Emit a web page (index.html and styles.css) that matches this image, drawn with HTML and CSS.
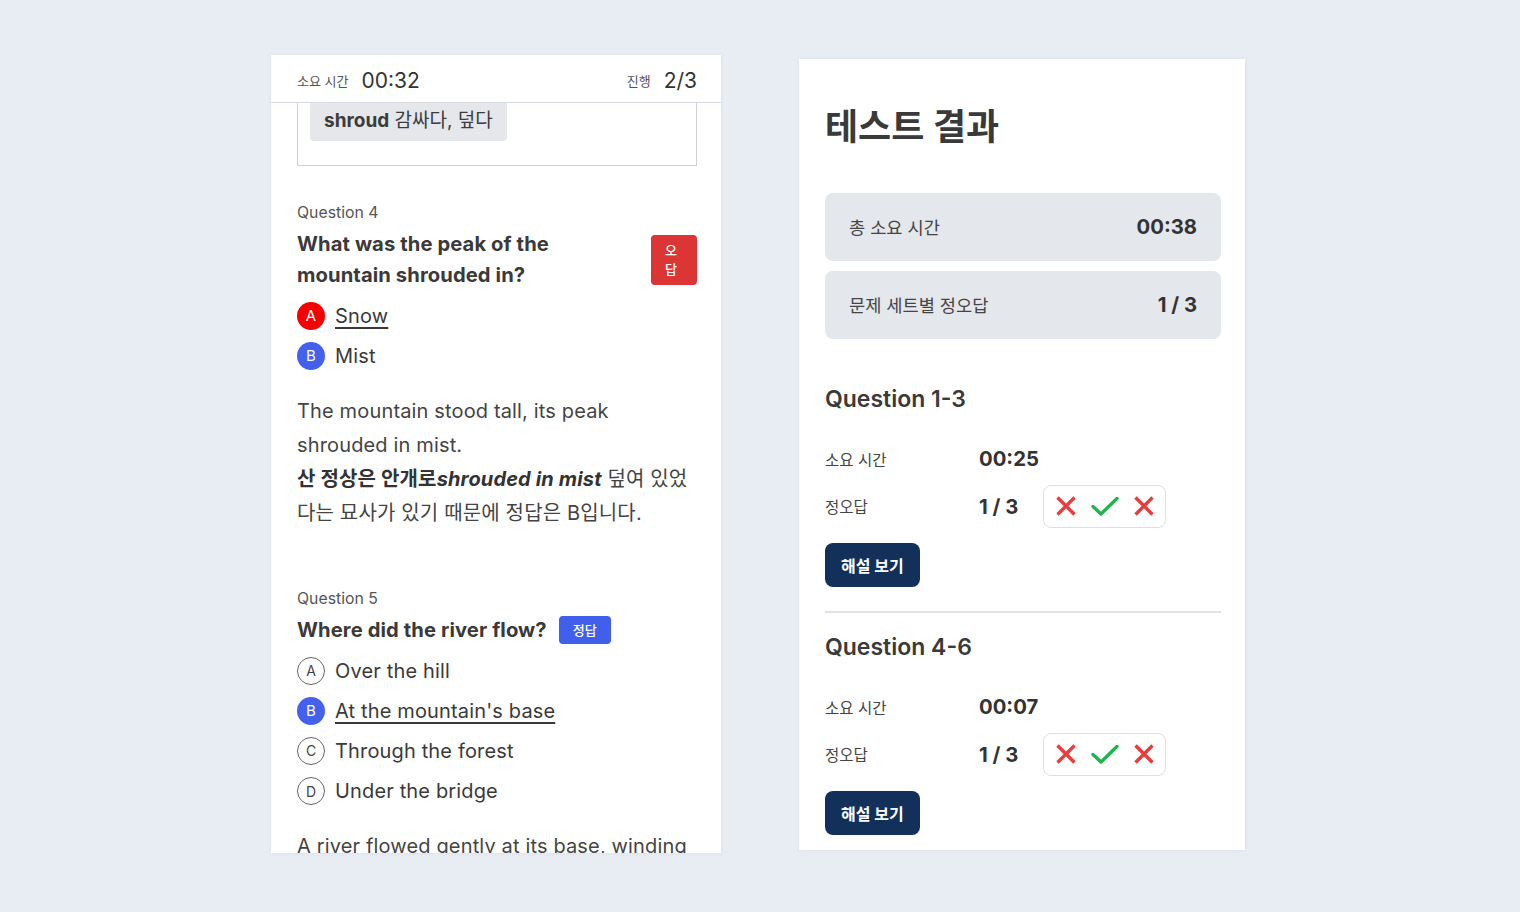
FILE: index.html
```html
<!DOCTYPE html>
<html lang="ko">
<head>
<meta charset="utf-8">
<title>테스트 결과</title>
<link rel="stylesheet" href="styles.css">
</head>
<body>
<main class="page">
  <section class="quiz">
    <header class="quiz-head">
      <div class="stat"><span class="stat-label">소요 시간</span><span class="stat-value">00:32</span></div>
      <div class="stat"><span class="stat-label">진행</span><span class="stat-value">2/3</span></div>
    </header>
    <div class="quiz-body">
      <div class="vocab-box">
        <span class="chip"><b>shroud</b> 감싸다, 덮다</span>
      </div>

      <article class="question q4">
        <p class="q-label">Question 4</p>
        <div class="q-title-row">
          <h3 class="q-title">What was the peak of the mountain shrouded in?</h3>
          <span class="badge badge-wrong">오답</span>
        </div>
        <ul class="options">
          <li class="option"><span class="opt-mark mark-red">A</span><span class="opt-text picked">Snow</span></li>
          <li class="option"><span class="opt-mark mark-blue">B</span><span class="opt-text">Mist</span></li>
        </ul>
        <p class="explain">The mountain stood tall, its peak shrouded in mist.<br><b>산 정상은 안개로<i>shrouded in mist</i></b> 덮여 있었다는 묘사가 있기 때문에 정답은 B입니다.</p>
      </article>

      <article class="question q5">
        <p class="q-label">Question 5</p>
        <div class="q-title-row">
          <h3 class="q-title q-title-inline">Where did the river flow?</h3>
          <span class="badge badge-right">정답</span>
        </div>
        <ul class="options">
          <li class="option"><span class="opt-mark mark-outline">A</span><span class="opt-text">Over the hill</span></li>
          <li class="option"><span class="opt-mark mark-blue">B</span><span class="opt-text picked">At the mountain's base</span></li>
          <li class="option"><span class="opt-mark mark-outline">C</span><span class="opt-text">Through the forest</span></li>
          <li class="option"><span class="opt-mark mark-outline">D</span><span class="opt-text">Under the bridge</span></li>
        </ul>
        <p class="explain">A river flowed gently at its base, winding through the valley below.</p>
      </article>
    </div>
  </section>

  <section class="result">
    <h1 class="result-title">테스트 결과</h1>
    <div class="summary">
      <div class="summary-card"><span class="summary-label">총 소요 시간</span><span class="summary-value">00:38</span></div>
      <div class="summary-card"><span class="summary-label">문제 세트별 정오답</span><span class="summary-value">1 / 3</span></div>
    </div>

    <div class="set set-first">
      <h2 class="set-title">Question 1-3</h2>
      <div class="set-row row-time"><span class="row-label">소요 시간</span><span class="row-value">00:25</span></div>
      <div class="set-row row-score"><span class="row-label">정오답</span><span class="row-value">1 / 3</span>
        <span class="marks">
          <svg class="icon-x" viewBox="0 0 22 22" width="22" height="22"><path d="M2.5 2.5L19.5 19.5M19.5 2.5L2.5 19.5"/></svg>
          <svg class="icon-check" viewBox="0 0 28 22" width="28" height="22"><path d="M2 11.5L10 19L26 3.5"/></svg>
          <svg class="icon-x" viewBox="0 0 22 22" width="22" height="22"><path d="M2.5 2.5L19.5 19.5M19.5 2.5L2.5 19.5"/></svg>
        </span>
      </div>
      <button class="btn" type="button">해설 보기</button>
    </div>

    <div class="set set-next">
      <h2 class="set-title">Question 4-6</h2>
      <div class="set-row row-time"><span class="row-label">소요 시간</span><span class="row-value">00:07</span></div>
      <div class="set-row row-score"><span class="row-label">정오답</span><span class="row-value">1 / 3</span>
        <span class="marks">
          <svg class="icon-x" viewBox="0 0 22 22" width="22" height="22"><path d="M2.5 2.5L19.5 19.5M19.5 2.5L2.5 19.5"/></svg>
          <svg class="icon-check" viewBox="0 0 28 22" width="28" height="22"><path d="M2 11.5L10 19L26 3.5"/></svg>
          <svg class="icon-x" viewBox="0 0 22 22" width="22" height="22"><path d="M2.5 2.5L19.5 19.5M19.5 2.5L2.5 19.5"/></svg>
        </span>
      </div>
      <button class="btn" type="button">해설 보기</button>
    </div>
  </section>
</main>
</body>
</html>
```

FILE: styles.css
```css
* { box-sizing: border-box; }

html, body {
  margin: 0;
  padding: 0;
  background: #e8ecf3;
  font-family: Inter, "Noto Sans CJK KR", sans-serif;
  color: #3a3a3a;
}

.page {
  width: 1520px;
  height: 912px;
  display: flex;
  justify-content: center;
  align-items: center;
  gap: 78px;
  padding-right: 4px;
  padding-bottom: 4px;
}

/* ---------- left: quiz review ---------- */
.quiz {
  width: 450px;
  height: 798px;
  background: #fff;
  display: flex;
  flex-direction: column;
  overflow: hidden;
  box-shadow: 0 0 3px rgba(200, 210, 225, 0.5);
}

.quiz-head {
  flex: 0 0 48px;
  display: flex;
  justify-content: space-between;
  align-items: center;
  padding: 3px 24px 0 26px;
  border-bottom: 1px solid #d8dce2;
}

.stat {
  display: flex;
  align-items: center;
  gap: 13px;
}

.stat-label {
  font-size: 13px;
  color: #555;
}

.stat-value {
  font-size: 21px;
  color: #333;
}

.quiz-body {
  flex: 1;
  overflow: hidden;
  padding: 0 24px 0 26px;
}

.vocab-box {
  margin-top: -17px;
  border: 1px solid #cfd1d4;
  padding: 14px 12px 24px;
}

.chip {
  display: inline-block;
  background: #e5e7eb;
  border-radius: 4px;
  padding: 6px 14px;
  font-size: 19px;
  line-height: 28px;
  color: #3c3c3c;
}

.chip b { font-weight: 700; }

.question { margin-top: 36px; }
.q5 { margin-top: 57px; }

.q-label {
  margin: 0;
  font-size: 15.8px;
  line-height: 22px;
  color: #555;
}

.q-title-row {
  margin-top: 5px;
  display: flex;
  align-items: center;
  gap: 12px;
}

.q-title {
  margin: 0;
  flex: 1;
  font-size: 20.2px;
  line-height: 30.5px;
  font-weight: 700;
  letter-spacing: 0.1px;
  color: #3a3a3a;
  padding-right: 4px;
}

.q-title-inline { flex: 0 0 auto; padding-right: 0; }

.badge {
  color: #fff;
  font-size: 13px;
  font-weight: 500;
  border-radius: 4px;
}

.badge-wrong {
  flex: 0 0 46px;
  width: 46px;
  background: #dc3535;
  padding: 6px 13px 6px 14px;
  line-height: 19px;
  word-break: break-all;
  text-align: left;
}

.badge-right {
  background: #405fec;
  padding: 0 14px;
  line-height: 28px;
  text-align: center;
}

.options {
  list-style: none;
  margin: 9.5px 0 0;
  padding: 0;
  display: flex;
  flex-direction: column;
  gap: 8.2px;
}

.option {
  display: flex;
  align-items: center;
  gap: 10px;
  height: 32px;
}

.opt-mark {
  flex: 0 0 28px;
  width: 28px;
  height: 28px;
  border-radius: 50%;
  display: flex;
  align-items: center;
  justify-content: center;
  font-size: 15px;
  color: #fff;
}

.mark-red { background: #f60000; }
.mark-blue { background: #4461ee; }
.mark-outline {
  border: 1.5px solid #666;
  color: #444;
  font-size: 14px;
}

.opt-text {
  font-size: 20px;
  line-height: 32px;
  letter-spacing: 0.15px;
  color: #3a3a3a;
}

.picked {
  text-decoration: underline;
  text-underline-offset: 4px;
  text-decoration-thickness: 1.5px;
}

.explain {
  margin: 22px 0 0;
  font-size: 20px;
  line-height: 34.2px;
  letter-spacing: 0.15px;
  color: #444;
}

.explain b { font-weight: 700; color: #333; }

/* ---------- right: result ---------- */
.result {
  width: 446px;
  height: 791px;
  background: #fff;
  padding: 44px 24px 0 26px;
  overflow: hidden;
  box-shadow: 0 0 3px rgba(200, 210, 225, 0.5);
}

.result-title {
  margin: 0;
  font-size: 36px;
  line-height: 48px;
  font-weight: 700;
  color: #3a3a3a;
}

.summary {
  margin-top: 42px;
  display: flex;
  flex-direction: column;
  gap: 10px;
}

.summary-card {
  height: 68px;
  background: #e4e7eb;
  border-radius: 8px;
  display: flex;
  justify-content: space-between;
  align-items: center;
  padding: 0 24px;
}

.summary-label {
  font-size: 17.6px;
  color: #444;
}

.summary-value {
  font-size: 20.3px;
  font-weight: 700;
  color: #333;
}

.set-first { padding-top: 45px; }

.set-next {
  margin-top: 24px;
  border-top: 2px solid #dfe2e7;
  padding-top: 19px;
}

.set-title {
  margin: 0;
  font-size: 23px;
  line-height: 30px;
  font-weight: 600;
  color: #3a3a3a;
}

.set-row {
  display: flex;
  align-items: center;
}

.row-time {
  margin-top: 30px;
  height: 30px;
}

.row-score {
  margin-top: 11.5px;
  height: 42.5px;
}

.row-label {
  flex: 0 0 154px;
  font-size: 15.5px;
  color: #444;
}

.row-value {
  font-size: 20.3px;
  font-weight: 700;
  color: #333;
}

.marks {
  margin-left: 25px;
  height: 42.5px;
  display: flex;
  align-items: center;
  gap: 14px;
  padding: 0 10px 0 11px;
  border: 1px solid #dcdfe4;
  border-radius: 8px;
}

.marks svg { display: block; fill: none; }

.icon-x { stroke: #ec3b3b; stroke-width: 3.4; }

.icon-check {
  stroke: #1fb54c;
  stroke-width: 3.4;
  stroke-linecap: round;
  stroke-linejoin: round;
}

.btn {
  margin-top: 15px;
  height: 44px;
  padding: 0 16px;
  border: 0;
  border-radius: 8px;
  background: #13305a;
  color: #fff;
  font-family: Inter, "Noto Sans CJK KR", sans-serif;
  font-size: 16px;
  font-weight: 700;
  display: block;
}
```
